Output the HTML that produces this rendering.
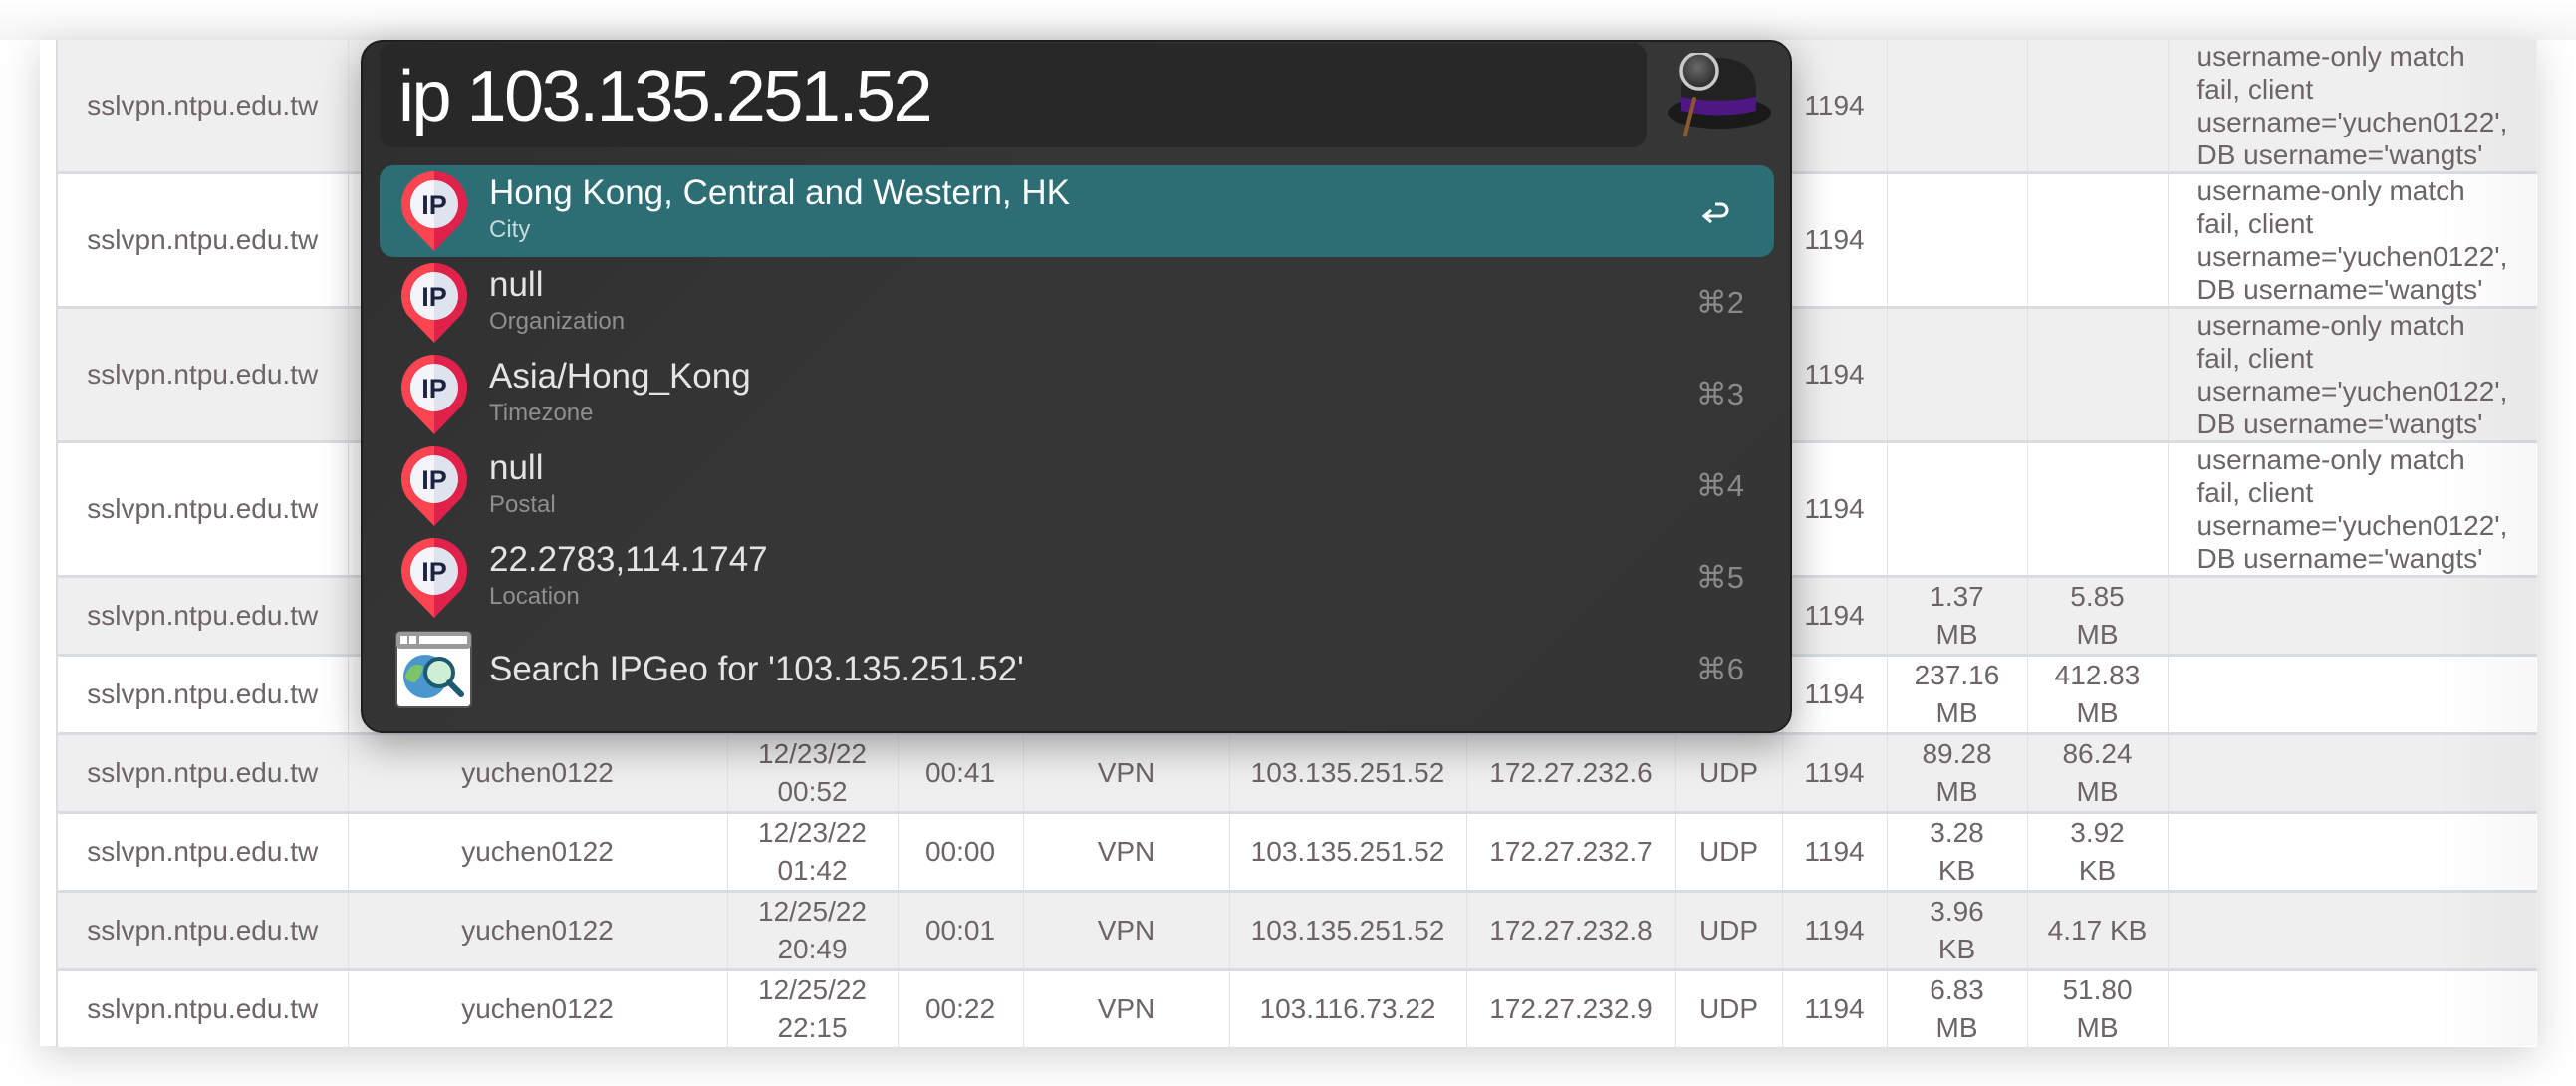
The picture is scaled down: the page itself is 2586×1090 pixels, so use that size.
<!DOCTYPE html>
<html><head><meta charset="utf-8">
<style>
*{margin:0;padding:0;box-sizing:border-box}
html,body{width:2586px;height:1090px;overflow:hidden;background:#fff;font-family:"Liberation Sans",sans-serif}
#card{position:absolute;left:40px;top:40px;width:2506px;height:1010px;background:#fff;box-shadow:0 10px 40px rgba(0,0,0,0.18)}
#topfade{position:absolute;left:0;top:0;width:2586px;height:40px;background:linear-gradient(#fff,#f4f4f4)}
table{position:absolute;left:56px;top:40px;border-collapse:collapse;table-layout:fixed;width:2490px;color:#6d6466;font-size:28px}
td{text-align:center;vertical-align:middle;border-right:1.5px solid #e2e2e2;border-bottom:3px solid #d9dde2;line-height:38px;padding:0;white-space:nowrap;overflow:hidden}
td:first-child{border-left:2px solid #d9dde2}
tr.g td{background:#efefef}
tr.w td{background:#fff}
td.last{text-align:left;padding-left:29px;line-height:33px;border-right:none}
#fade{position:absolute;left:2445px;top:40px;width:101px;height:1010px;background:linear-gradient(90deg,rgba(0,0,0,0),rgba(0,0,0,0.03))}
#alf{position:absolute;left:362px;top:40px;width:1437px;height:696px;background:linear-gradient(135deg,#2e2e2e,#363636 40%,#353535);border-radius:22px;border:2px solid #1e1e1e;box-shadow:0 12px 40px rgba(0,0,0,0.35)}
#sf{position:absolute;left:17px;top:1px;width:1272px;height:105px;background:#282828;border-radius:14px}
#sf span{position:absolute;left:19px;top:14px;font-size:72px;color:#fff;letter-spacing:-2.5px;line-height:80px}
.row{position:absolute;left:17px;width:1400px;height:92px;border-radius:14px}
.row.sel{background:#2c6e74}
.row svg.pin{position:absolute;left:22px;top:6px}
.t{position:absolute;left:110px;top:8px;font-size:35px;color:#e4e4e4;line-height:40px;white-space:nowrap}
.s{position:absolute;left:110px;top:51px;font-size:24px;color:#8f8f8f;line-height:28px}
.sel .t{color:#fff}.sel .s{color:#c6d9db}
.k{position:absolute;right:30px;top:28px;font-size:31px;color:#8a8a8a;line-height:36px}
</style></head><body>
<div id="topfade"></div>
<div id="card"></div>
<table>
<colgroup><col style="width:292px"><col style="width:381px"><col style="width:171px"><col style="width:126px"><col style="width:207px"><col style="width:238px"><col style="width:210px"><col style="width:107px"><col style="width:105px"><col style="width:141px"><col style="width:141px"><col style="width:371px"></colgroup>
<tr class="g" style="height:130px"><td>sslvpn.ntpu.edu.tw</td><td>yuchen0122</td><td>12/23/22<br>00:10</td><td>00:00</td><td>VPN</td><td>103.135.251.52</td><td>172.27.232.2</td><td>UDP</td><td>1194</td><td></td><td></td><td class="last">username-only match<br>fail, client<br>username='yuchen0122',<br>DB username='wangts'</td></tr>
<tr class="w" style="height:131px"><td>sslvpn.ntpu.edu.tw</td><td>yuchen0122</td><td></td><td></td><td>VPN</td><td></td><td></td><td>UDP</td><td>1194</td><td></td><td></td><td class="last">username-only match<br>fail, client<br>username='yuchen0122',<br>DB username='wangts'</td></tr>
<tr class="g" style="height:131px"><td>sslvpn.ntpu.edu.tw</td><td>yuchen0122</td><td></td><td></td><td>VPN</td><td></td><td></td><td>UDP</td><td>1194</td><td></td><td></td><td class="last">username-only match<br>fail, client<br>username='yuchen0122',<br>DB username='wangts'</td></tr>
<tr class="w" style="height:132px"><td>sslvpn.ntpu.edu.tw</td><td>yuchen0122</td><td></td><td></td><td>VPN</td><td></td><td></td><td>UDP</td><td>1194</td><td></td><td></td><td class="last">username-only match<br>fail, client<br>username='yuchen0122',<br>DB username='wangts'</td></tr>
<tr class="g"><td>sslvpn.ntpu.edu.tw</td><td>yuchen0122</td><td></td><td></td><td>VPN</td><td></td><td></td><td>UDP</td><td>1194</td><td>1.37<br>MB</td><td>5.85<br>MB</td><td class="last"></td></tr>
<tr class="w"><td>sslvpn.ntpu.edu.tw</td><td>yuchen0122</td><td></td><td></td><td>VPN</td><td></td><td></td><td>UDP</td><td>1194</td><td>237.16<br>MB</td><td>412.83<br>MB</td><td class="last"></td></tr>
<tr class="g"><td>sslvpn.ntpu.edu.tw</td><td>yuchen0122</td><td>12/23/22<br>00:52</td><td>00:41</td><td>VPN</td><td>103.135.251.52</td><td>172.27.232.6</td><td>UDP</td><td>1194</td><td>89.28<br>MB</td><td>86.24<br>MB</td><td class="last"></td></tr>
<tr class="w"><td>sslvpn.ntpu.edu.tw</td><td>yuchen0122</td><td>12/23/22<br>01:42</td><td>00:00</td><td>VPN</td><td>103.135.251.52</td><td>172.27.232.7</td><td>UDP</td><td>1194</td><td>3.28<br>KB</td><td>3.92<br>KB</td><td class="last"></td></tr>
<tr class="g"><td>sslvpn.ntpu.edu.tw</td><td>yuchen0122</td><td>12/25/22<br>20:49</td><td>00:01</td><td>VPN</td><td>103.135.251.52</td><td>172.27.232.8</td><td>UDP</td><td>1194</td><td>3.96<br>KB</td><td>4.17 KB</td><td class="last"></td></tr>
<tr class="w"><td style="border-bottom:none">sslvpn.ntpu.edu.tw</td><td style="border-bottom:none">yuchen0122</td><td style="border-bottom:none">12/25/22<br>22:15</td><td style="border-bottom:none">00:22</td><td style="border-bottom:none">VPN</td><td style="border-bottom:none">103.116.73.22</td><td style="border-bottom:none">172.27.232.9</td><td style="border-bottom:none">UDP</td><td style="border-bottom:none">1194</td><td style="border-bottom:none">6.83<br>MB</td><td style="border-bottom:none">51.80<br>MB</td><td class="last" style="border-bottom:none"></td></tr>
</table>
<div id="fade"></div>

<svg width="0" height="0" style="position:absolute"><defs>
<g id="pin">
<path d="M33 0 A33 33 0 0 0 6 52 L33 80 Z" fill="#fd4552"/>
<path d="M33 0 A33 33 0 0 1 60 52 L33 80 Z" fill="#e0224a"/>
<circle cx="33" cy="33" r="24" fill="#dfe3ee"/>
<path d="M33 9 A24 24 0 0 0 33 57 Z" fill="#f3f5fa"/>
<text x="33" y="43" text-anchor="middle" font-family="Liberation Sans,sans-serif" font-weight="bold" font-size="27" fill="#1b2340">IP</text>
</g>
<radialGradient id="lens" cx="0.45" cy="0.4" r="0.6"><stop offset="0" stop-color="#6a6a6a"/><stop offset="1" stop-color="#2a2a2a"/></radialGradient>
</defs></svg>

<div id="alf">
<div id="sf"><span>ip 103.135.251.52</span></div>
<svg style="position:absolute;left:1310px;top:11px" width="106" height="84" viewBox="0 0 106 84">
<ellipse cx="52" cy="60" rx="52" ry="16" fill="#1a1a1a"/>
<path d="M14 56 L14 36 Q16 6 52 5 Q88 6 89 36 L89 56 Q52 66 14 56 Z" fill="#222"/>
<path d="M14 44 Q52 52 89 44 L89 58 Q52 67 14 58 Z" fill="#4f1785"/>
<line x1="27" y1="46" x2="18" y2="82" stroke="#8a5a2a" stroke-width="4" stroke-linecap="round"/>
<circle cx="32" cy="18" r="18" fill="url(#lens)" stroke="#c9c9c9" stroke-width="3.5"/>
</svg>

<div class="row sel" style="top:124px"><svg class="pin" width="66" height="80"><use href="#pin"/></svg><div class="t">Hong Kong, Central and Western, HK</div><div class="s">City</div>
<svg style="position:absolute;right:45px;top:37px" width="28" height="22" viewBox="0 0 28 22"><path d="M14 2 H20 A6 6 0 0 1 20 14 H4 M10 8 L3 14 L10 20" fill="none" stroke="#fff" stroke-width="3"/></svg></div>
<div class="row" style="top:216px"><svg class="pin" width="66" height="80"><use href="#pin"/></svg><div class="t">null</div><div class="s">Organization</div><div class="k">⌘2</div></div>
<div class="row" style="top:308px"><svg class="pin" width="66" height="80"><use href="#pin"/></svg><div class="t">Asia/Hong_Kong</div><div class="s">Timezone</div><div class="k">⌘3</div></div>
<div class="row" style="top:400px"><svg class="pin" width="66" height="80"><use href="#pin"/></svg><div class="t">null</div><div class="s">Postal</div><div class="k">⌘4</div></div>
<div class="row" style="top:492px"><svg class="pin" width="66" height="80"><use href="#pin"/></svg><div class="t">22.2783,114.1747</div><div class="s">Location</div><div class="k">⌘5</div></div>
<div class="row" style="top:584px">
<svg style="position:absolute;left:16px;top:7px" width="77" height="78" viewBox="0 0 77 78">
<rect x="1" y="1" width="75" height="76" rx="4" fill="#fff" stroke="#555" stroke-width="2"/>
<rect x="1" y="1" width="75" height="17" rx="4" fill="#9a9a9a"/>
<rect x="5" y="5" width="7" height="8" fill="#fff"/><rect x="14" y="5" width="7" height="8" fill="#fff"/><rect x="24" y="5" width="48" height="8" fill="#fff"/>
<circle cx="30" cy="46" r="22" fill="#4a96cf"/>
<path d="M12 40 Q20 30 28 36 Q26 46 20 52 Q12 52 10 46 Z" fill="#7cc46a"/>
<circle cx="44" cy="42" r="14" fill="#cfeed6" stroke="#1d5a6e" stroke-width="4"/>
<line x1="54" y1="52" x2="66" y2="64" stroke="#1d5a6e" stroke-width="6" stroke-linecap="round"/>
</svg>
<div class="t" style="top:26px">Search IPGeo for '103.135.251.52'</div><div class="k">⌘6</div></div>
</div>
</body></html>
